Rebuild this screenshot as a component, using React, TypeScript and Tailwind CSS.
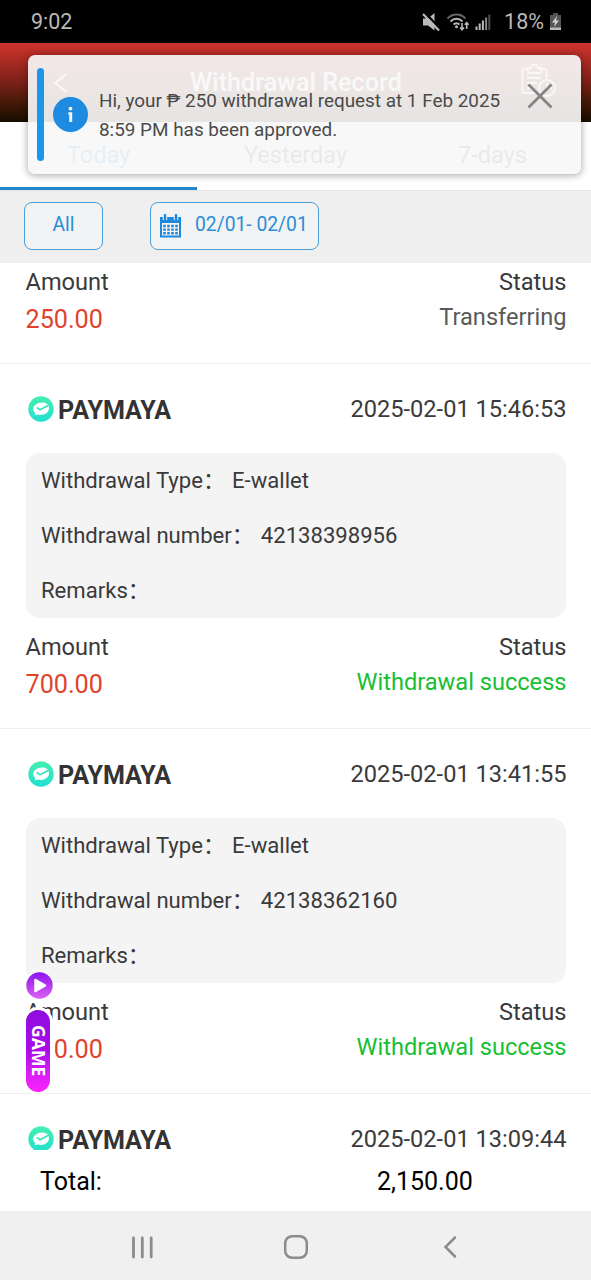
import React from 'react';

interface WithdrawalRecord {
    id: string;
    method: string;
    date: string;
    type: string;
    number: string;
    remarks: string;
    amount: string;
    status: string;
}

const records: WithdrawalRecord[] = [
    { id: '1', method: 'PAYMAYA', date: '2025-02-01 15:46:53', type: 'E-wallet', number: '42138398956', remarks: '', amount: '700.00', status: 'Withdrawal success' },
    { id: '2', method: 'PAYMAYA', date: '2025-02-01 13:41:55', type: 'E-wallet', number: '42138362160', remarks: '', amount: '500.00', status: 'Withdrawal success' },
];

const StatusBar: React.FC = () => (
    <div className="flex h-[43px] shrink-0 items-center justify-between bg-black pl-[31px] pr-[29px] text-[#b9b9b9]">
        <span className="pt-[2px] text-[21.5px]">9:02</span>
        <div className="flex items-center">
            {/* Muted speaker */}
            <svg className="mr-[5px] h-[20px] w-[20px]" viewBox="0 0 20 20" fill="currentColor">
                <path d="M2 6.500h5l6.500-5.500v17.500L7 13.500H2z" />
                <path d="M3.500 0.500 19 16.500" stroke="#000" strokeWidth="2.500" />
                <path d="M2 2 18 18.500" stroke="currentColor" strokeWidth="2.300" />
            </svg>
            {/* Wifi with traffic arrows */}
            <svg className="mr-[5px] h-[20px] w-[24px]" viewBox="0 0 24 20" fill="none" stroke="currentColor">
                <path d="M1.500 6.500c5-5.300 13-5.300 18 0" stroke="#666" strokeWidth="2" />
                <path d="M4.500 9.500c3.500-3.600 8.500-3.600 12 0M7.500 12.500c2-1.800 4-1.800 6 0" strokeWidth="1.900" />
                <circle cx="10.500" cy="14.800" r="1.500" fill="currentColor" stroke="none" />
                <path d="M16 11v6.500M14 15.500l2 2.200 2-2.200M20.700 17v-6M18.800 12.800l1.900-2.200 1.900 2.200" strokeWidth="1.600" />
            </svg>
            {/* Signal */}
            <svg className="mr-[12px] h-[18px] w-[17px]" viewBox="0 0 17 18" fill="currentColor">
                <rect x="0.500" y="13.500" width="2" height="3.500" />
                <rect x="3.700" y="10.500" width="2" height="6.500" />
                <rect x="6.900" y="7.500" width="2" height="9.500" />
                <rect x="10.100" y="4.500" width="2" height="12.500" fill="#888" />
                <rect x="13.300" y="1.500" width="2" height="15.500" fill="#4c4c4c" />
            </svg>
            <span className="pt-[2px] text-[21.5px]">18%</span>
            {/* Battery charging */}
            <svg className="ml-[5px] h-[19px] w-[13px]" viewBox="0 0 13 19">
                <path d="M4 1h5v2h3v15H1V3h3z" fill="#555" />
                <path d="M1 15.500h11V18H1z" fill="#b9b9b9" />
                <path d="M8 4 3 10.500h3L5 15l5-6.500H7z" fill="#d0d0d0" />
            </svg>
        </div>
    </div>
);

const Header: React.FC = () => (
    <div className="flex h-[79px] shrink-0 items-center justify-between bg-linear-to-b from-[#d0342d] via-[#7c2018] to-[#160d00] pl-[53px] pr-[35px] text-white">
        <svg className="h-[22px] w-[15px]" viewBox="0 0 15 22" fill="none" stroke="currentColor" strokeWidth="2.2">
            <path d="M13 2 2.500 11 13 20" />
        </svg>
        <h1 className="pl-[4px] text-[25.2px] font-medium">Withdrawal Record</h1>
        <svg className="mb-1 h-[36px] w-[36px]" viewBox="0 0 36 36" fill="none" stroke="currentColor" strokeWidth="1.8">
            <path d="M8 6H4.500a2 2 0 0 0-2 2v20a2 2 0 0 0 2 2H18M21 6h3.500a2 2 0 0 1 2 2v7" />
            <path d="M8 5h3a3.500 3.500 0 0 1 7 0h3v5H8zM7 15h14M7 20h10M7 25h7" />
            <circle cx="27" cy="25" r="8" />
            <path d="M27 20v5h5" />
        </svg>
    </div>
);

const Tabs: React.FC = () => (
    <div className="grid h-[68px] shrink-0 grid-cols-3 bg-white text-center text-[23.6px] text-[#444]">
        <div className="border-b-3 border-[#2487ce] pt-[16px] text-[#1989dd]">Today</div>
        <div className="pt-[16px]">Yesterday</div>
        <div className="pt-[16px]">7-days</div>
    </div>
);

const Filters: React.FC = () => (
    <div className="flex h-[73px] shrink-0 items-center gap-[47px] border-t border-[#e4e4e4] bg-[#efefef] pb-[2px] pl-[24px] text-[19.3px] text-[#2b8ed6]">
        <button className="h-[48px] w-[79px] rounded-[8px] border border-[#4a9fd8] bg-[#f1f3f5] pb-px">All</button>
        <button className="flex h-[48px] w-[169px] items-center rounded-[8px] border border-[#4a9fd8] bg-[#f1f3f5] pl-[8px]">
            <svg className="mr-[13px] h-[24px] w-[23px] shrink-0" viewBox="0 0 23 24">
                <path d="M1 3h21v20.500H1z" fill="#1e88dd" />
                <path d="M3 9h17v12.500H3z" fill="#f1f3f5" />
                <path d="M6 1v5M17 1v5" stroke="#f1f3f5" strokeWidth="4.400" />
                <path d="M6 1v4M17 1v4" stroke="#1e88dd" strokeWidth="2.400" strokeLinecap="round" />
                <path d="M4.200 12h14.600M4.200 15.600h14.600M4.200 19.200h14.600" stroke="#1e88dd" strokeWidth="2.400" strokeDasharray="2.600 1.400" />
            </svg>
            <span className="pb-[2px] whitespace-nowrap">02/01- 02/01</span>
        </button>
    </div>
);

const PaymayaLogo: React.FC = () => (
    <svg className="mb-px h-[26px] w-[26px]" viewBox="0 0 26 26">
        <defs>
            <linearGradient id="maya" x1="0" y1="0" x2="0" y2="1">
                <stop offset="0" stopColor="#45efae" />
                <stop offset="1" stopColor="#22dfd0" />
            </linearGradient>
        </defs>
        <circle cx="13" cy="13" r="12.7" fill="url(#maya)" />
        <path d="M12.500 6.800c4.800-1 8.500 1.500 8.500 5.200 0 4-3.700 6.900-8.300 6.900-1 0-1.800-.1-2.600-.4l-3.300.8.300-2.600C5.800 15.600 5.200 14.300 5.200 12.900c0-3 3-5.400 7.300-6.100z" fill="#fff" />
        <path d="m8.800 11.500 3.200 2.300 8.500-4.600" fill="none" stroke="#34e6be" strokeWidth="1.7" />
    </svg>
);

const RecordHeading: React.FC<{ method: string; date: string }> = ({ method, date }) => (
    <div className="flex h-[89px] items-center justify-between pl-[28px] pr-[24.5px] pt-[2px] text-[23.6px]">
        <div className="flex items-center gap-1">
            <PaymayaLogo />
            <span className="pt-[2px] text-[25.1px] leading-[36px] font-bold text-[#333]">{method}</span>
        </div>
        <span>{date}</span>
    </div>
);

const DetailRow: React.FC<{ label: string; value: string }> = ({ label, value }) => (
    <div className="flex h-[55px] items-center">
        <span>{label}：</span>
        <span className="pl-[7px]">{value}</span>
    </div>
);

const RecordFooter: React.FC<{ amount: string; status: string; statusClass: string }> = ({ amount, status, statusClass }) => (
    <div className="flex h-[110px] justify-between pl-[25.5px] pr-[24.5px] pt-[12px] text-[23.6px]">
        <div>
            <div className="leading-[34px]">Amount</div>
            <div className="text-[25.2px] leading-[41px] text-[#e0432c]">{amount}</div>
        </div>
        <div className="text-right">
            <div className="leading-[34px]">Status</div>
            <div className={`leading-[36px] ${statusClass}`}>{status}</div>
        </div>
    </div>
);

const RecordCard: React.FC<{ record: WithdrawalRecord }> = ({ record }) => (
    <div className="border-b border-[#efefef]">
        <RecordHeading method={record.method} date={record.date} />
        <div className="ml-[26px] mr-[25px] rounded-[14px] bg-[#f4f4f4] pl-[15px] text-[22.1px]">
            <DetailRow label="Withdrawal Type" value={record.type} />
            <DetailRow label="Withdrawal number" value={record.number} />
            <DetailRow label="Remarks" value={record.remarks} />
        </div>
        <RecordFooter amount={record.amount} status={record.status} statusClass="text-[#17bf33]" />
    </div>
);

const Toast: React.FC = () => (
    <div className="absolute left-[28px] top-[55px] flex h-[119px] w-[553px] rounded-[7px] bg-[#f7f7f7]/92 py-[13px] pl-[9px] shadow-[0_1px_7px_1px_rgba(0,0,0,0.3)]">
        <div className="w-[7px] rounded-full bg-[#1c96ea]" />
        <svg className="ml-[9px] mt-[29px] h-[35px] w-[35px]" viewBox="0 0 35 35">
            <circle cx="17.500" cy="17.500" r="17.500" fill="#1e8be0" />
            <circle cx="17.500" cy="11.600" r="1.900" fill="#f3f3f3" />
            <path d="M15.200 15.200h4V25h-3v-7.500h-1z" fill="#f3f3f3" />
        </svg>
        <p className="ml-[11px] mt-[19px] w-[425px] text-[18.9px] leading-[28.5px] text-[#4a4a4a]">
            Hi, your ₱ 250 withdrawal request at 1 Feb 2025<br />8:59 PM has been approved.
        </p>
        <svg className="mt-[15px] ml-[2px] h-[26px] w-[28px] shrink-0" viewBox="0 0 28 26" stroke="#858585" strokeWidth="2.8">
            <path d="M2.500 1.500 25.500 24.500M25.500 1.500 2.500 24.500" />
        </svg>
    </div>
);

const GameWidget: React.FC = () => (
    <div className="absolute left-[26px] top-[972px] flex flex-col items-start">
        <svg className="h-[27px] w-[27px]" viewBox="0 0 27 27">
            <defs>
                <linearGradient id="play" x1="0" y1="0" x2="0" y2="1">
                    <stop offset="0" stopColor="#8a12ee" />
                    <stop offset="1" stopColor="#dc62f2" />
                </linearGradient>
            </defs>
            <circle cx="13.500" cy="13.500" r="13.2" fill="url(#play)" />
            <path d="M9.500 8 19 13.500 9.500 19z" fill="#fff" stroke="#fff" strokeWidth="2.5" strokeLinejoin="round" />
        </svg>
        <div className="mt-[11px] flex h-[82px] w-[23.5px] items-center justify-center rounded-full bg-linear-to-b from-[#8e0be0] via-[#a90ce6] to-[#ff22ff] font-['Open_Sans'] text-[17.6px] leading-none font-bold text-white ring-3 ring-white [writing-mode:vertical-rl]">
            GAME
        </div>
    </div>
);

const App: React.FC = () => {
    return (
        <div className="relative flex h-[1280px] w-[591px] flex-col overflow-hidden bg-white font-[Roboto,'Noto_Sans_CJK_SC',sans-serif] text-[#3a3a3a]">
            <StatusBar />
            <Header />
            <Tabs />
            <Filters />

            {/* Record list, scrolled past the first entry */}
            <div className="h-[887px] shrink-0 overflow-hidden">
                <div className="-mt-[10px] border-b border-[#efefef]">
                    <RecordFooter amount="250.00" status="Transferring" statusClass="text-[#5a5a5a]" />
                </div>
                {records.map(record => <RecordCard key={record.id} record={record} />)}
                <RecordHeading method="PAYMAYA" date="2025-02-01 13:09:44" />
            </div>

            <div className="flex h-[61px] shrink-0 items-center bg-white pl-[40px] pt-[2px] text-[25px] text-black">
                <span className="w-[337px]">Total:</span>
                <span>2,150.00</span>
            </div>

            {/* System navigation */}
            <div className="flex h-[69px] shrink-0 items-center bg-[#f0f0f0] pb-px pl-[131px] pt-[3px] text-[#8c8c8c]">
                <svg className="h-[24px] w-[23px]" viewBox="0 0 23 24" stroke="currentColor" strokeWidth="2.8" strokeLinecap="round">
                    <path d="M2.500 3v19M11.300 3v19M20.200 3v19" />
                </svg>
                <svg className="ml-[129px] h-[26px] w-[26px]" viewBox="0 0 26 26" fill="none" stroke="currentColor" strokeWidth="2.5">
                    <rect x="2.200" y="2.200" width="21.600" height="21.600" rx="7" />
                </svg>
                <svg className="ml-[134px] h-[24px] w-[15px]" viewBox="0 0 15 24" fill="none" stroke="currentColor" strokeWidth="2.5" strokeLinecap="round">
                    <path d="M12 2.500 2.500 12l9.500 9.500" />
                </svg>
            </div>

            <GameWidget />
            <Toast />
        </div>
    );
};

export default App;
